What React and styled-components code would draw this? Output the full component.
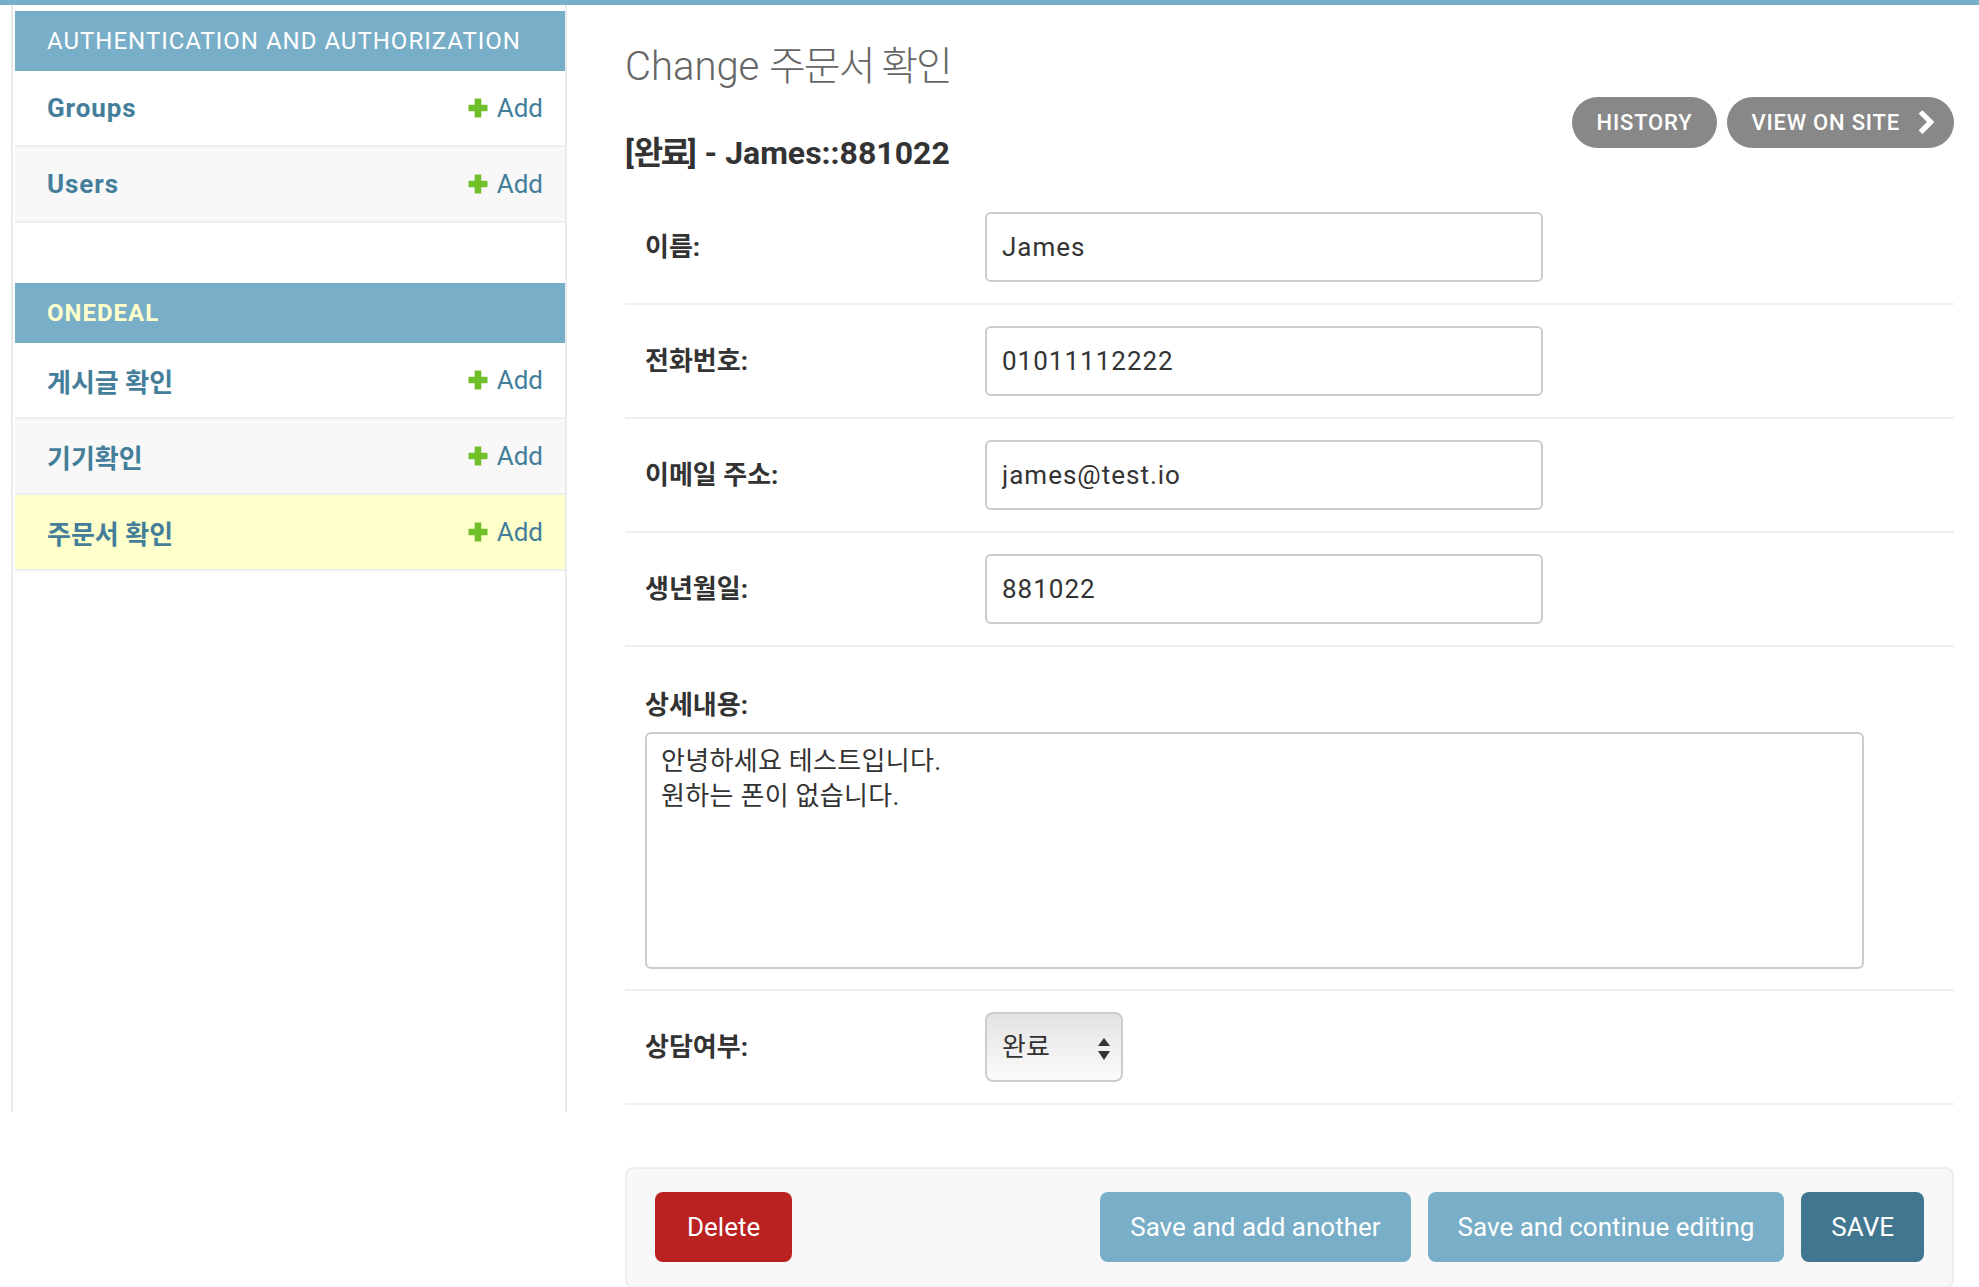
import React from 'react';
import styled, { createGlobalStyle } from 'styled-components';

const GlobalStyle = createGlobalStyle`
  html, body {
    margin: 0;
    padding: 0;
    background: #fff;
  }
  body {
    font-family: Roboto, "Noto Sans CJK KR", "Liberation Sans", sans-serif;
    color: #333;
  }
  * {
    box-sizing: border-box;
  }
`;

// Strip left over from the breadcrumbs bar
const TopBar = styled.div`
  height: 5px;
  background: #79aec8;
`;

const Main = styled.div`
  display: flex;
  align-items: flex-start;
`;

// Sidebar column (toggle edge + nav)
const SideColumn = styled.div`
  display: flex;
  flex: 0 0 auto;
  height: 1107px;
`;

const ToggleEdge = styled.div`
  width: 13px;
  border-right: 2px solid #eaeaea;
`;

const Sidebar = styled.nav`
  width: 554px;
  padding: 6px 0 0 2px;
  border-right: 2px solid #eaeaea;
`;

const Module = styled.section`
  margin-bottom: 60px;
`;

const Caption = styled.div`
  height: 60px;
  display: flex;
  align-items: center;
  padding-left: 32px;
  background: #79aec8;
  color: ${p => (p.$current ? '#ffc' : '#fff')};
  font-size: 24px;
  font-weight: ${p => (p.$current ? 700 : 400)};
  letter-spacing: 1px;
  text-transform: uppercase;
`;

const ModelRow = styled.div`
  height: 76px;
  display: flex;
  align-items: center;
  justify-content: space-between;
  padding: 0 22px 0 32px;
  border-bottom: 2px solid #eee;
  background: ${p => (p.$current ? '#ffc' : p.$even ? '#f8f8f8' : '#fff')};
`;

const ModelName = styled.a`
  font-size: 26px;
  font-weight: 700;
  color: #447e9b;
  text-decoration: none;
  letter-spacing: ${p => (p.$kr ? '0' : '0.9px')};
`;

const AddLink = styled.a`
  display: flex;
  align-items: center;
  gap: 9px;
  font-size: 26px;
  color: #447e9b;
  text-decoration: none;
`;

// Main content
const Content = styled.main`
  flex: 1;
  padding: 40px 25px 0 58px;
`;

const HeaderRow = styled.div`
  display: flex;
  justify-content: space-between;
  align-items: flex-start;
`;

const Title = styled.h1`
  margin: 0;
  font-size: 40px;
  font-weight: 300;
  line-height: 44px;
  color: #666;
`;

const Subtitle = styled.h2`
  margin: 45px 0 0;
  font-size: 32px;
  font-weight: 700;
  line-height: 38px;
  color: #333;
`;

const Hangul = styled.span`
  letter-spacing: ${p => p.$spacing || '0'};
`;

const ObjectTools = styled.div`
  display: flex;
  gap: 10px;
  margin-top: 52px;
`;

const ToolLink = styled.a`
  height: 51px;
  display: flex;
  align-items: center;
  gap: 14px;
  padding: 0 ${p => (p.$arrow ? '14px' : '25px')} 0 ${p => (p.$arrow ? '24px' : '25px')};
  border-radius: 26px;
  background: #888;
  color: #fff;
  font-size: 22px;
  font-weight: 500;
  letter-spacing: 0.8px;
  text-transform: uppercase;
  text-decoration: none;
`;

const Form = styled.form`
  margin-top: 19px;
`;

const FormRow = styled.div`
  display: flex;
  flex-direction: ${p => (p.$stacked ? 'column' : 'row')};
  align-items: ${p => (p.$stacked ? 'flex-start' : 'center')};
  padding: ${p => (p.$stacked ? '21px 20px 20px' : '21px 20px')};
  border-bottom: 2px solid #eee;
`;

const Label = styled.label`
  width: ${p => (p.$stacked ? 'auto' : '340px')};
  padding-top: ${p => (p.$stacked ? '22px' : '0')};
  margin-bottom: ${p => (p.$stacked ? '12px' : '0')};
  line-height: 30px;
  font-size: 26px;
  font-weight: 700;
  color: #333;
`;

const TextInput = styled.input`
  width: 558px;
  height: 70px;
  padding: 0 15px;
  border: 2px solid #ccc;
  border-radius: 6px;
  font-family: inherit;
  font-size: 26px;
  letter-spacing: 1px;
  color: #333;
  background: #fff;
  outline: none;
`;

const TextArea = styled.textarea`
  width: 1219px;
  height: 237px;
  padding: 10px 14px;
  border: 2px solid #ccc;
  border-radius: 6px;
  font-family: inherit;
  font-size: 26px;
  line-height: 35px;
  letter-spacing: 0.3px;
  color: #333;
  resize: none;
  outline: none;
`;

const SelectWrap = styled.div`
  position: relative;
  width: 138px;
  height: 70px;
`;

const Select = styled.select`
  appearance: none;
  width: 100%;
  height: 100%;
  padding: 0 15px;
  border: 2px solid #ccc;
  border-radius: 8px;
  background: linear-gradient(#e3e3e3, #f4f4f4 70%, #fbfbfb);
  font-family: inherit;
  font-size: 26px;
  color: #333;
  outline: none;
`;

const SelectArrows = styled.svg`
  position: absolute;
  right: 13px;
  top: 26px;
  pointer-events: none;
`;

const SubmitRow = styled.div`
  margin-top: 62px;
  display: flex;
  justify-content: space-between;
  align-items: center;
  padding: 23px 28px 24px;
  background: #f8f8f8;
  border: 2px solid #eee;
  border-radius: 8px;
`;

const ButtonGroup = styled.div`
  display: flex;
  gap: 17px;
`;

const Button = styled.button`
  height: 70px;
  padding: 0 ${p => (p.$variant === 'danger' ? '32px' : '30px')};
  border: none;
  border-radius: 8px;
  font-family: inherit;
  font-size: 26px;
  color: #fff;
  text-transform: ${p => (p.$variant === 'default' ? 'uppercase' : 'none')};
  background: ${p =>
    p.$variant === 'danger' ? '#ba2121' : p.$variant === 'default' ? '#417690' : '#79aec8'};
  cursor: pointer;
`;

const PlusIcon = () => (
  <svg width="20" height="20" viewBox="0 0 20 20">
    <path fill="#70bf2b" d="M6.7 0.5h6.6v6.2h6.2v6.6h-6.2v6.2h-6.6v-6.2h-6.2v-6.6h6.2z" />
  </svg>
);

const ArrowRight = () => (
  <svg width="26" height="26" viewBox="0 0 1792 1792">
    <path
      fill="#fff"
      d="M1363 877l-742 742q-19 19-45 19t-45-19l-166-166q-19-19-19-45t19-45l531-531-531-531q-19-19-19-45t19-45l166-166q19-19 45-19t45 19l742 742q19 19 19 45t-19 45z"
    />
  </svg>
);

const apps = [
  {
    name: 'Authentication and Authorization',
    models: [{ name: 'Groups' }, { name: 'Users' }],
  },
  {
    name: 'Onedeal',
    current: true,
    models: [
      { name: '게시글 확인', kr: true },
      { name: '기기확인', kr: true },
      { name: '주문서 확인', kr: true, current: true },
    ],
  },
];

const fields = [
  { label: '이름:', value: 'James' },
  { label: '전화번호:', value: '01011112222' },
  { label: '이메일 주소:', value: 'james@test.io' },
  { label: '생년월일:', value: '881022' },
];

const App = () => {
  return (
    <>
      <GlobalStyle />
      <TopBar />
      <Main>
        <SideColumn>
          <ToggleEdge />
          <Sidebar>
            {apps.map(app => (
              <Module key={app.name}>
                <Caption $current={app.current}>{app.name}</Caption>
                {app.models.map((model, i) => (
                  <ModelRow key={model.name} $even={i % 2 === 1} $current={model.current}>
                    <ModelName $kr={model.kr}>{model.name}</ModelName>
                    <AddLink>
                      <PlusIcon />
                      Add
                    </AddLink>
                  </ModelRow>
                ))}
              </Module>
            ))}
          </Sidebar>
        </SideColumn>

        <Content>
          <HeaderRow>
            <div>
              <Title>
                Change <Hangul $spacing="-2px">주문서 확인</Hangul>
              </Title>
              <Subtitle>
                [<Hangul $spacing="-2.5px">완료</Hangul>] - James::881022
              </Subtitle>
            </div>
            <ObjectTools>
              <ToolLink>History</ToolLink>
              <ToolLink $arrow>
                View on site
                <ArrowRight />
              </ToolLink>
            </ObjectTools>
          </HeaderRow>

          <Form>
            {fields.map(field => (
              <FormRow key={field.label}>
                <Label>{field.label}</Label>
                <TextInput type="text" defaultValue={field.value} />
              </FormRow>
            ))}
            <FormRow $stacked>
              <Label $stacked>상세내용:</Label>
              <TextArea defaultValue={'안녕하세요 테스트입니다.\n원하는 폰이 없습니다.'} />
            </FormRow>
            <FormRow>
              <Label>상담여부:</Label>
              <SelectWrap>
                <Select defaultValue="done">
                  <option value="done">완료</option>
                  <option value="wait">대기</option>
                </Select>
                <SelectArrows width="12" height="22" viewBox="0 0 12 22">
                  <path d="M6 0 L12 8 H0 Z" fill="#333" />
                  <path d="M0 13 H12 L6 22 Z" fill="#333" />
                </SelectArrows>
              </SelectWrap>
            </FormRow>

            <SubmitRow>
              <Button type="button" $variant="danger">Delete</Button>
              <ButtonGroup>
                <Button type="button">Save and add another</Button>
                <Button type="button">Save and continue editing</Button>
                <Button type="button" $variant="default">Save</Button>
              </ButtonGroup>
            </SubmitRow>
          </Form>
        </Content>
      </Main>
    </>
  );
};

export default App;
